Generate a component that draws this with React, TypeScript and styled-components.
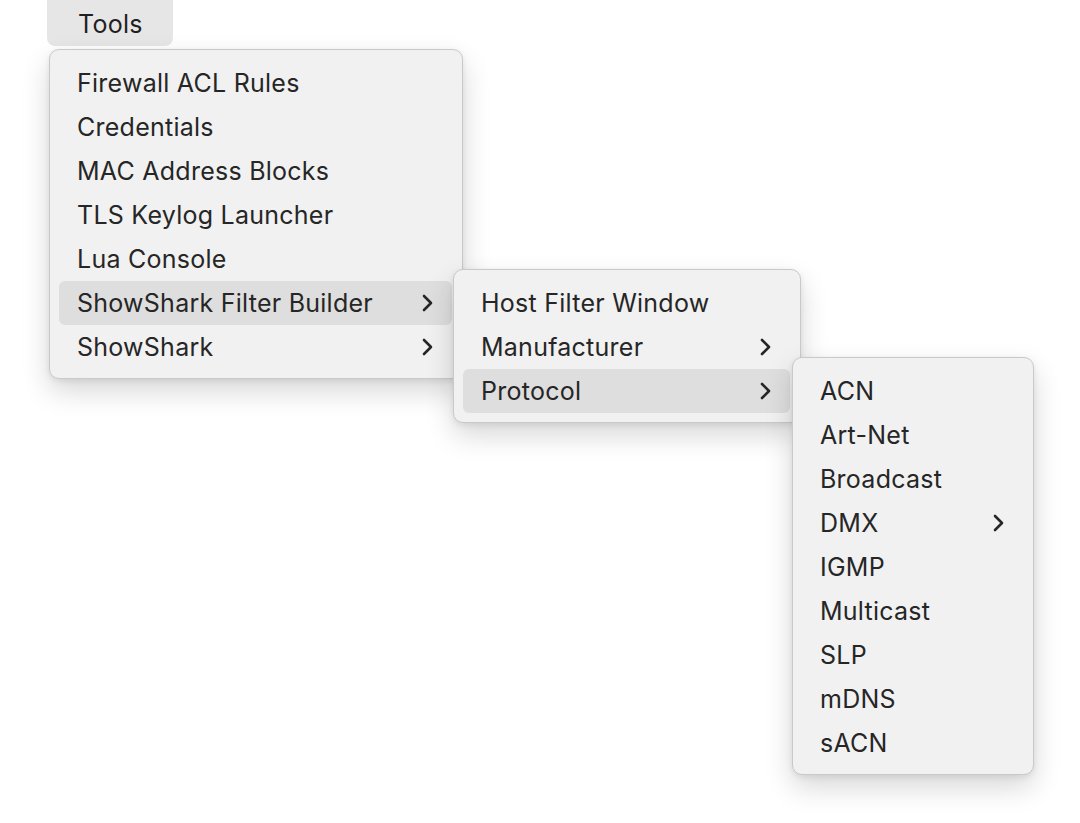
import styled, { createGlobalStyle } from "styled-components";

const GlobalStyle = createGlobalStyle`
  body {
    margin: 0;
    background: #ffffff;
    font-family: Inter, "Noto Sans", "Liberation Sans", sans-serif;
    color: #262626;
  }
`;

const Page = styled.div`
  padding-left: 47px;
  height: 823px;
`;

const ToolsButton = styled.div`
  width: 126px;
  height: 46px;
  box-sizing: border-box;
  padding-left: 31px;
  background: #e6e6e6;
  border-radius: 0 0 8px 8px;
  font-size: 25px;
  letter-spacing: 0.25px;
  line-height: 48px;
  color: #1f1f1f;
`;

const Menu = styled.div<{ $width: number }>`
  width: ${(p) => p.$width}px;
  box-sizing: border-box;
  padding: 11px 10px 9px 9px;
  background: #f1f1f1;
  border: 1px solid #c9c9c9;
  border-radius: 10px;
  box-shadow: 0 12px 28px rgba(0, 0, 0, 0.16), 0 2px 6px rgba(0, 0, 0, 0.08);
`;

const RootMenu = styled(Menu)`
  margin-top: 3px;
  margin-left: 2px;
`;

const SubMenu = styled(Menu)<{ $gap: number }>`
  position: absolute;
  top: -12px;
  left: calc(100% + ${(p) => p.$gap}px);
  z-index: 2;
`;

const Item = styled.div<{ $active?: boolean }>`
  position: relative;
  height: 44px;
  display: flex;
  align-items: center;
  padding: 0 19px 0 18px;
  border-radius: 6px;
  font-size: 25px;
  letter-spacing: 0.25px;
  background: ${(p) => (p.$active ? "#dedede" : "transparent")};
`;

const Label = styled.span`
  flex: 1;
  white-space: nowrap;
`;

const Chevron = () => (
  <svg width="11" height="18" viewBox="0 0 11 18" fill="none">
    <path
      d="M2 2 L9 9 L2 16"
      stroke="#262626"
      strokeWidth="2.6"
      strokeLinecap="round"
      strokeLinejoin="round"
    />
  </svg>
);

const protocols = ["ACN", "Art-Net", "Broadcast", "DMX", "IGMP", "Multicast", "SLP", "mDNS", "sACN"];

export default function App() {
  return (
    <>
      <GlobalStyle />
      <Page>
        <ToolsButton>Tools</ToolsButton>
        <RootMenu $width={414}>
          <Item><Label>Firewall ACL Rules</Label></Item>
          <Item><Label>Credentials</Label></Item>
          <Item><Label>MAC Address Blocks</Label></Item>
          <Item><Label>TLS Keylog Launcher</Label></Item>
          <Item><Label>Lua Console</Label></Item>
          <Item $active>
            <Label>ShowShark Filter Builder</Label>
            <Chevron />
            <SubMenu $width={348} $gap={1}>
              <Item><Label>Host Filter Window</Label></Item>
              <Item>
                <Label>Manufacturer</Label>
                <Chevron />
              </Item>
              <Item $active>
                <Label>Protocol</Label>
                <Chevron />
                <SubMenu $width={242} $gap={2}>
                  {protocols.map((name) => (
                    <Item key={name}>
                      <Label>{name}</Label>
                      {name === "DMX" && <Chevron />}
                    </Item>
                  ))}
                </SubMenu>
              </Item>
            </SubMenu>
          </Item>
          <Item>
            <Label>ShowShark</Label>
            <Chevron />
          </Item>
        </RootMenu>
      </Page>
    </>
  );
}
